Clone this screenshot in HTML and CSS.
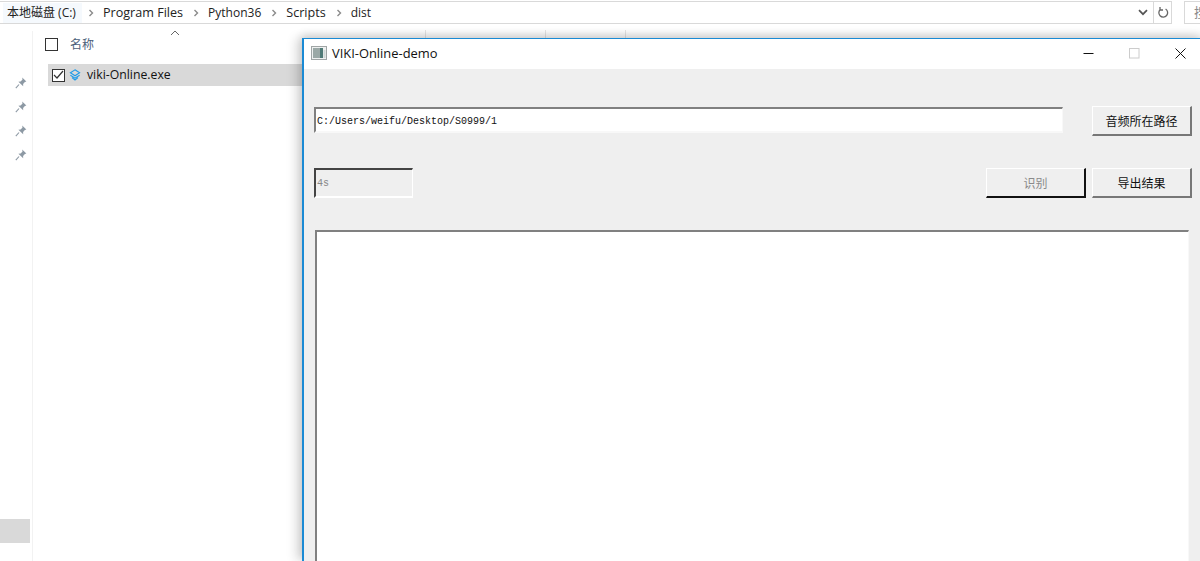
FILE: index.html
```html
<!DOCTYPE html>
<html lang="zh-CN">
<head>
<meta charset="utf-8">
<title>VIKI-Online-demo</title>
<link rel="stylesheet" href="styles.css">
</head>
<body>
<div class="desktop">
  <div class="explorer">
    <header class="addressrow">
      <nav class="addressbar">
        <span class="crumb crumb-first">本地磁盘 (C:)</span>
        <svg class="chev" width="6" height="8" viewBox="0 0 6 8"><path d="M1.500 1l3 3-3 3" fill="none" stroke="#8a8a8a" stroke-width="1.400"/></svg>
        <span class="crumb">Program Files</span>
        <svg class="chev" width="6" height="8" viewBox="0 0 6 8"><path d="M1.500 1l3 3-3 3" fill="none" stroke="#8a8a8a" stroke-width="1.400"/></svg>
        <span class="crumb crumb-tight">Python36</span>
        <svg class="chev" width="6" height="8" viewBox="0 0 6 8"><path d="M1.500 1l3 3-3 3" fill="none" stroke="#8a8a8a" stroke-width="1.400"/></svg>
        <span class="crumb">Scripts</span>
        <svg class="chev" width="6" height="8" viewBox="0 0 6 8"><path d="M1.500 1l3 3-3 3" fill="none" stroke="#8a8a8a" stroke-width="1.400"/></svg>
        <span class="crumb crumb-tight">dist</span>
        <span class="spacer"></span>
        <svg class="dropdown" width="10" height="7" viewBox="0 0 10 7"><path d="M1 1.200l4 4 4-4" fill="none" stroke="#555" stroke-width="1.700"/></svg>
        <span class="refresh">
          <svg width="12" height="13" viewBox="0 0 12 13"><path d="M3.600 3.200A4.400 4.400 0 1 0 8.600 3M3 1v3h3" fill="none" stroke="#666" stroke-width="1.300"/></svg>
        </span>
      </nav>
      <div class="search"><span class="search-text">搜</span></div>
    </header>
    <div class="main">
      <aside class="nav">
        <div class="pins">
          <svg class="pin" width="12" height="12" viewBox="0 0 12 12"><path d="M7.200 .6l4.200 3.800-1.500.6-1.800 2 .1 2.200-4.800-4.500 2.200-.2 1.900-1.900z" fill="#8d99a4"/><path d="M4 7.500L.8 11.200" stroke="#8d99a4" stroke-width="1.100"/></svg>
          <svg class="pin" width="12" height="12" viewBox="0 0 12 12"><path d="M7.200 .6l4.200 3.800-1.500.6-1.800 2 .1 2.200-4.800-4.500 2.200-.2 1.900-1.900z" fill="#8d99a4"/><path d="M4 7.500L.8 11.200" stroke="#8d99a4" stroke-width="1.100"/></svg>
          <svg class="pin" width="12" height="12" viewBox="0 0 12 12"><path d="M7.200 .6l4.200 3.800-1.500.6-1.800 2 .1 2.200-4.800-4.500 2.200-.2 1.900-1.900z" fill="#8d99a4"/><path d="M4 7.500L.8 11.200" stroke="#8d99a4" stroke-width="1.100"/></svg>
          <svg class="pin" width="12" height="12" viewBox="0 0 12 12"><path d="M7.200 .6l4.200 3.800-1.500.6-1.800 2 .1 2.200-4.800-4.500 2.200-.2 1.900-1.900z" fill="#8d99a4"/><path d="M4 7.500L.8 11.200" stroke="#8d99a4" stroke-width="1.100"/></svg>
        </div>
        <div class="nav-selected"></div>
      </aside>
      <section class="files">
        <div class="colhead">
          <span class="check check-head"></span>
          <span class="colname">名称</span>
          <svg class="sort" width="10" height="6" viewBox="0 0 10 6"><path d="M1 5l4-4 4 4" fill="none" stroke="#666" stroke-width="1"/></svg>
          <span class="colsep colsep-a"></span>
          <span class="colsep colsep-b"></span>
          <span class="colsep colsep-c"></span>
        </div>
        <div class="filerow">
          <span class="check check-row">
            <svg width="11" height="10" viewBox="0 0 11 10"><path d="M1 5l3 3 6-7" fill="none" stroke="#333" stroke-width="1.200"/></svg>
          </span>
          <svg class="fileicon" width="12" height="12" viewBox="0 0 12 12"><path d="M6 .8l4.600 3L6 6.800l-4.600-3zM1.400 6.200L6 9.200l4.600-3M3 8.600L6 11l3-2.400" fill="none" stroke="#1e9be8" stroke-width="1.100"/></svg>
          <span class="filename">viki-Online.exe</span>
        </div>
      </section>
    </div>
  </div>

  <div class="window">
    <div class="titlebar">
      <svg class="appicon" width="16" height="14" viewBox="0 0 16 14">
        <rect x=".5" y=".5" width="15" height="13" fill="#eef0f0" stroke="#9fa5a5"/>
        <rect x="2" y="2" width="7" height="10" fill="#9aa8a6"/>
        <rect x="9" y="2" width="3" height="10" fill="#4f7a76"/>
        <rect x="12.500" y="4" width="2" height="8" fill="#cfd8d6"/>
      </svg>
      <span class="wintitle">VIKI-Online-demo</span>
      <span class="spacer"></span>
      <div class="wincontrols">
        <span class="winbtn"><svg width="11" height="11" viewBox="0 0 11 11"><path d="M.5 5.500h10" stroke="#111" stroke-width="1"/></svg></span>
        <span class="winbtn"><svg width="11" height="11" viewBox="0 0 11 11"><rect x=".5" y=".5" width="9.500" height="9.500" fill="none" stroke="#ccc"/></svg></span>
        <span class="winbtn"><svg width="11" height="11" viewBox="0 0 11 11"><path d="M.5 .5l10 10M10.500 .5l-10 10" stroke="#111" stroke-width="1"/></svg></span>
      </div>
    </div>
    <div class="client">
      <div class="row row-path">
        <div class="field field-path">C:/Users/weifu/Desktop/S0999/1</div>
        <button class="btn btn-path">音频所在路径</button>
      </div>
      <div class="row row-actions">
        <div class="field field-time">4s</div>
        <span class="spacer"></span>
        <button class="btn btn-default" disabled>识别</button>
        <button class="btn btn-export">导出结果</button>
      </div>
      <div class="output"></div>
    </div>
  </div>
</div>
</body>
</html>
```

FILE: styles.css
```css
* { box-sizing: border-box; }
html, body { margin: 0; padding: 0; }
body {
  width: 1200px;
  height: 561px;
  overflow: hidden;
  background: #fff;
  font-family: "Open Sans", "Noto Sans CJK SC", sans-serif;
}
.desktop { position: relative; width: 1200px; height: 561px; overflow: hidden; }
.spacer { flex: 1; }

.explorer { display: flex; flex-direction: column; height: 561px; }
.addressrow { display: flex; height: 23px; margin-top: 1px; gap: 12px; flex: none; }
.addressbar {
  flex: none;
  width: 1172px;
  display: flex;
  align-items: center;
  border-top: 1px solid #d9d9d9;
  border-bottom: 1px solid #d9d9d9;
  border-right: 1px solid #d9d9d9;
  font-size: 12.6px;
  color: #222;
  padding-left: 3px;
}
.crumb { padding: 0 4px; white-space: nowrap; line-height: 20px; }
.crumb-first { background: #f5f9fd; font-size: 12px; padding-right: 6px; }
.crumb-tight { font-size: 12px; }
.chev { margin: 0 5px 0 6px; flex: none; }
.dropdown { margin-right: 5px; flex: none; }
.refresh {
  width: 18px;
  height: 21px;
  border-left: 1px solid #d9d9d9;
  display: flex;
  align-items: center;
  justify-content: center;
  flex: none;
}
.search {
  flex: 1;
  border: 1px solid #d9d9d9;
  border-right: 0;
  padding-left: 9px;
  font-size: 13px;
  line-height: 21px;
  color: #8c8c8c;
  overflow: hidden;
  white-space: nowrap;
}

.main { display: flex; flex: 1; min-height: 0; }
.nav {
  flex: none;
  width: 33px;
  border-right: 1px solid #f2f2f2;
  margin-top: 7px;
  display: flex;
  flex-direction: column;
}
.pins { display: flex; flex-direction: column; gap: 12px; padding: 46px 0 0 15px; }
.pin { display: block; }
.nav-selected { margin-top: 358px; width: 30px; height: 24px; background: #d9d9d9; }

.files { flex: 1; padding-left: 12px; }
.colhead { position: relative; height: 40px; display: flex; align-items: center; font-size: 12px; color: #4c607a; }
.colname { margin-left: 12px; }
.check { display: block; width: 13px; height: 13px; border: 1px solid #333; background: #fff; flex: none; }
.check-row { display: flex; align-items: center; justify-content: center; margin-left: 4px; }
.sort { position: absolute; left: 125px; top: 6px; }
.colsep { position: absolute; top: 6px; width: 1px; height: 14px; background: #e5e5e5; }
.colsep-a { left: 380px; }
.colsep-b { left: 500px; }
.colsep-c { left: 580px; }

.filerow {
  display: flex;
  align-items: center;
  width: 270px;
  height: 22px;
  margin-left: 3px;
  background: #d9d9d9;
  font-size: 12.25px;
  color: #111;
}
.fileicon { margin-left: 4px; flex: none; }
.filename { margin: -2px 0 0 6px; white-space: nowrap; }

.window {
  position: absolute;
  left: 302px;
  top: 38px;
  width: 901px;
  height: 523px;
  border-left: 2px solid #1a8ad4;
  border-top: 1px solid #1a8ad4;
  box-shadow: -6px 0 10px rgba(0,0,0,.14), 0 -4px 8px rgba(0,0,0,.12);
  background: #efefef;
  display: flex;
  flex-direction: column;
}
.titlebar {
  flex: none;
  height: 30px;
  padding: 0 0 2px 7px;
  background: #fff;
  display: flex;
  align-items: center;
}
.appicon { flex: none; }
.wintitle { margin-left: 5px; font-size: 12.9px; color: #111; white-space: nowrap; }
.wincontrols { display: flex; }
.winbtn { width: 46px; height: 28px; display: flex; align-items: center; justify-content: center; }

.client { flex: 1; padding: 37px 11px 0 10px; display: flex; flex-direction: column; min-height: 0; }
.row { display: flex; align-items: flex-start; flex: none; }
.row-path { height: 32px; }
.row-actions { margin-top: 30px; height: 32px; }
.field {
  border-style: solid;
  border-width: 2px 1px 2px 2px;
  font-family: "Liberation Mono", monospace;
  font-size: 10px;
  padding-left: 1px;
}
.field-path {
  width: 749px;
  height: 26px;
  margin-top: 1px;
  padding-top: 3px;
  background: #fff;
  border-color: #808080 #f8f8f8 #f8f8f8 #808080;
  color: #111;
  line-height: 19px;
}
.field-time {
  width: 99px;
  height: 30px;
  padding-top: 1px;
  background: #efefef;
  border-color: #444 #fff #fff #444;
  color: #888;
  line-height: 25px;
}
.btn {
  font-family: "Noto Sans CJK SC", sans-serif;
  font-size: 12px;
  padding: 0;
  background: #efefef;
  border-style: solid;
  border-width: 1px 2px 2px 1px;
  border-color: #fff #777 #777 #fff;
  color: #111;
  height: 30px;
  width: 100px;
}
.btn-path { margin-left: 29px; }
.btn-default {
  border-color: #fff #111 #111 #fff;
  color: #8a8a8a;
  margin-right: 6px;
}
.output {
  margin: 30px 0 0 1px;
  width: 874px;
  flex: 1;
  background: #fff;
  border-style: solid;
  border-width: 2px 1px 0 2px;
  border-color: #808080 #f8f8f8 #f8f8f8 #808080;
}
```
